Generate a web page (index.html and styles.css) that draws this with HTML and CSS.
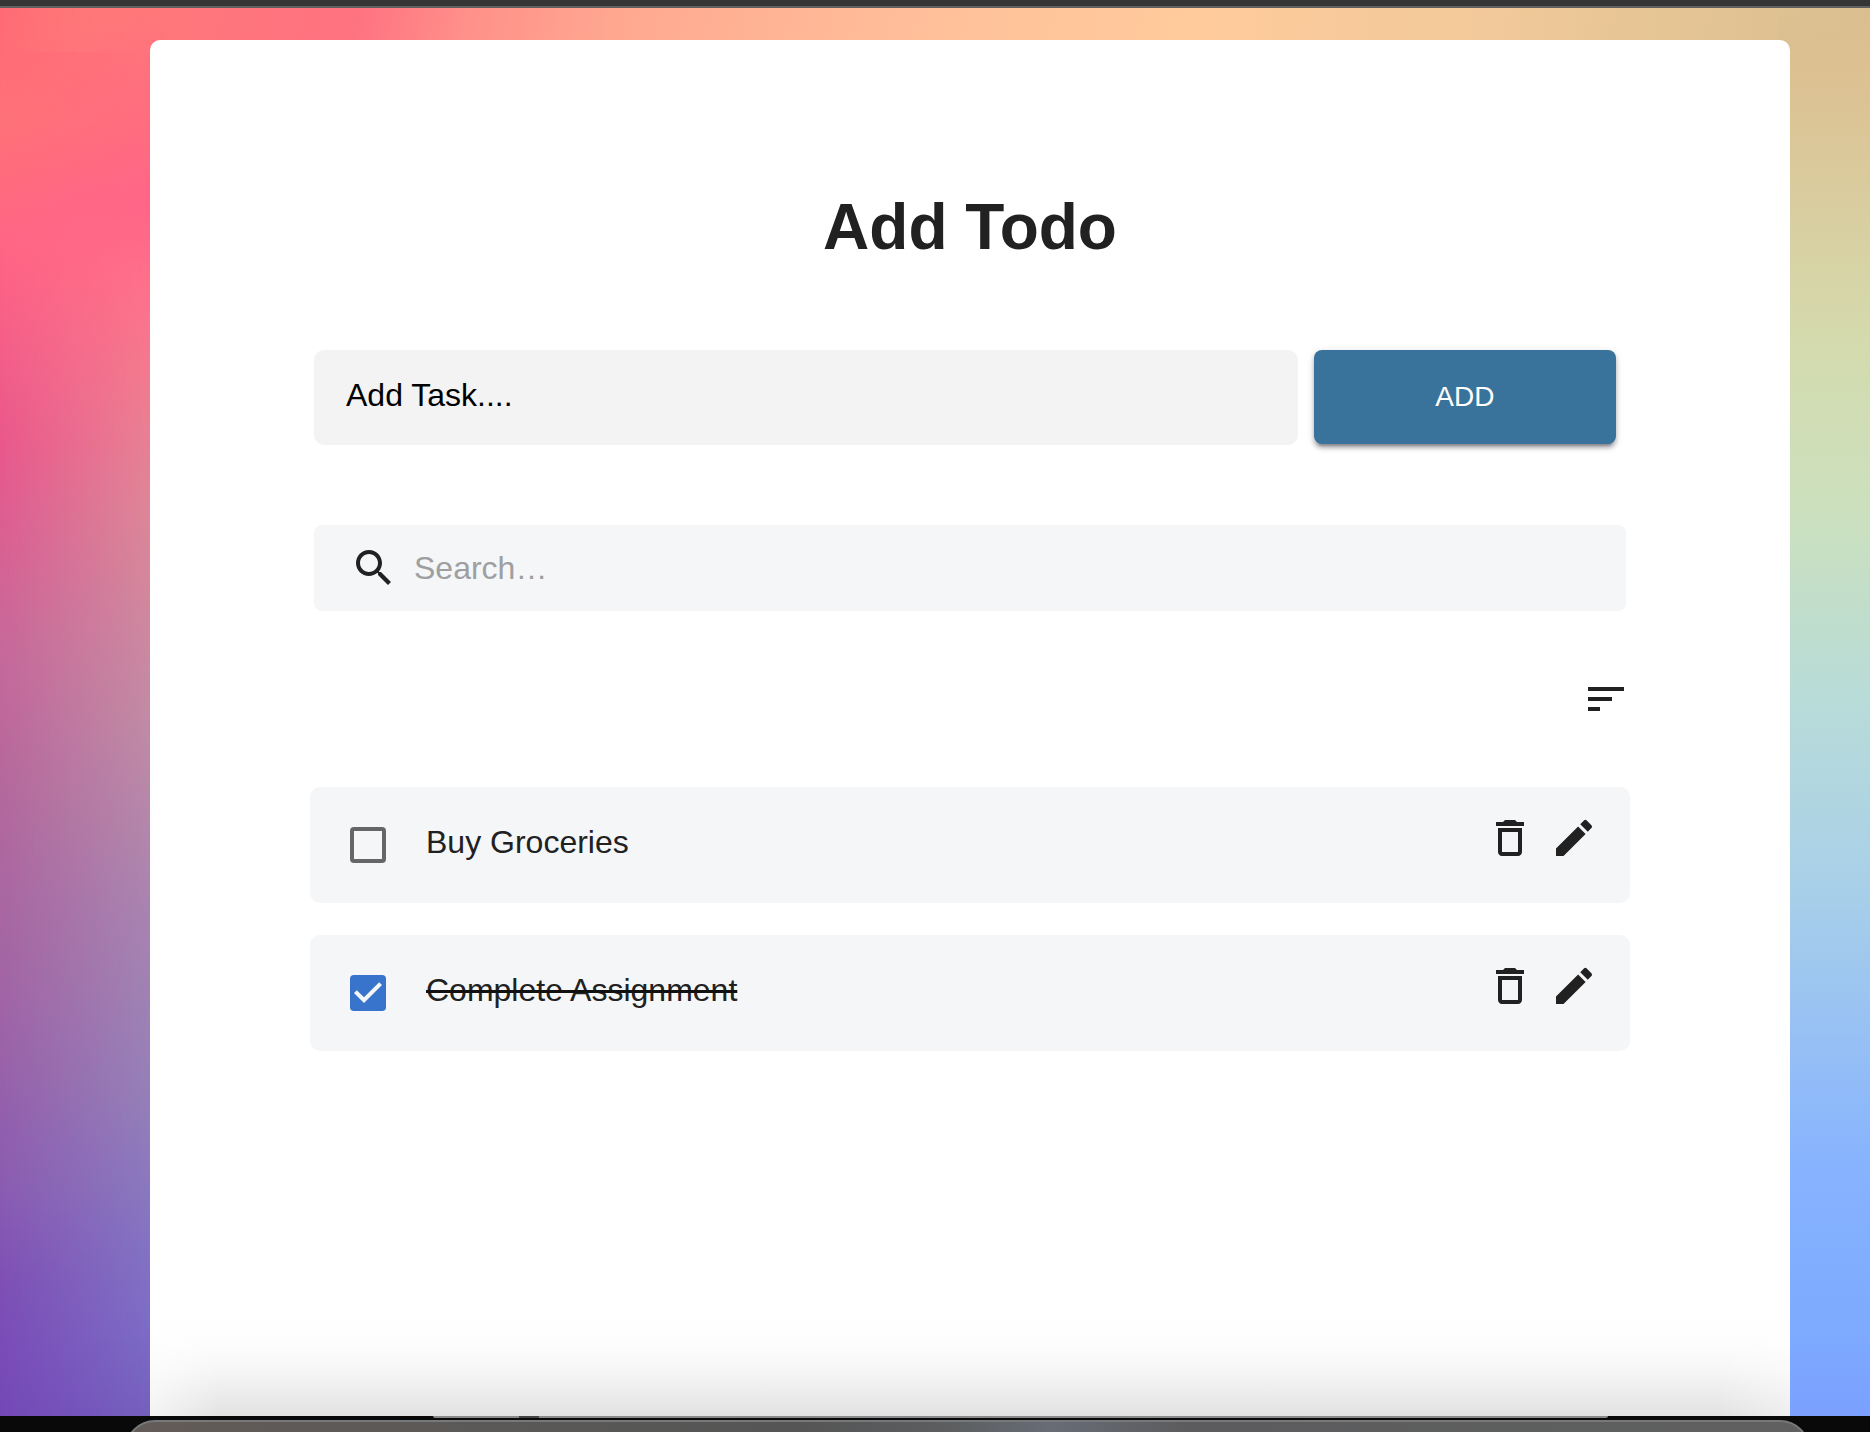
FILE: index.html
```html
<!DOCTYPE html>
<html lang="en">
<head>
<meta charset="utf-8">
<title>Add Todo</title>
<link rel="stylesheet" href="styles.css">
</head>
<body>
<div class="titlebar"></div>
<div class="page">
  <main class="card">
    <h1 class="heading">Add Todo</h1>
    <form class="add-form">
      <input class="task-input" type="text" placeholder="Add Task...." aria-label="Add task">
      <button class="add-button" type="button">ADD</button>
    </form>
    <label class="search">
      <svg class="icon" viewBox="0 0 24 24" aria-hidden="true"><path d="M15.5 14h-.79l-.28-.27C15.41 12.59 16 11.11 16 9.5 16 5.91 13.09 3 9.5 3S3 5.91 3 9.5 5.91 16 9.5 16c1.61 0 3.09-.59 4.23-1.57l.27.28v.79l5 4.99L20.49 19l-4.99-5zm-6 0C7.01 14 5 11.99 5 9.5S7.01 5 9.5 5 14 7.01 14 9.5 11.99 14 9.5 14z"/></svg>
      <input class="search-input" type="text" placeholder="Search…" aria-label="Search">
    </label>
    <div class="toolbar">
      <button class="icon-button" type="button" aria-label="Sort"><svg class="icon" viewBox="0 0 24 24"><path d="M3 18h6v-2H3v2zM3 6v2h18V6H3zm0 7h12v-2H3v2z"/></svg></button>
    </div>
    <ul class="todos">
      <li class="todo">
        <input class="check" type="checkbox" id="todo-1">
        <label class="todo-label" for="todo-1">Buy Groceries</label>
        <div class="actions">
          <button class="icon-button" type="button" aria-label="Delete"><svg class="icon" viewBox="0 0 24 24"><path d="M6 19c0 1.1.9 2 2 2h8c1.1 0 2-.9 2-2V7H6v12zM8 9h8v10H8V9zm7.500-5-1-1h-5l-1 1H5v2h14V4z"/></svg></button>
          <button class="icon-button" type="button" aria-label="Edit"><svg class="icon" viewBox="0 0 24 24"><path d="M3 17.250V21h3.750L17.810 9.940l-3.750-3.750L3 17.250zM20.710 7.040c.39-.39.39-1.020 0-1.410l-2.340-2.340a.9959.9959 0 0 0-1.410 0l-1.830 1.830 3.750 3.750 1.830-1.830z"/></svg></button>
        </div>
      </li>
      <li class="todo">
        <input class="check" type="checkbox" id="todo-2" checked>
        <label class="todo-label" for="todo-2">Complete Assignment</label>
        <div class="actions">
          <button class="icon-button" type="button" aria-label="Delete"><svg class="icon" viewBox="0 0 24 24"><path d="M6 19c0 1.1.9 2 2 2h8c1.1 0 2-.9 2-2V7H6v12zM8 9h8v10H8V9zm7.500-5-1-1h-5l-1 1H5v2h14V4z"/></svg></button>
          <button class="icon-button" type="button" aria-label="Edit"><svg class="icon" viewBox="0 0 24 24"><path d="M3 17.250V21h3.750L17.810 9.940l-3.750-3.750L3 17.250zM20.710 7.040c.39-.39.39-1.020 0-1.410l-2.340-2.340a.9959.9959 0 0 0-1.410 0l-1.830 1.830 3.750 3.750 1.830-1.830z"/></svg></button>
        </div>
      </li>
    </ul>
  </main>
</div>
<div class="desktop"><div class="window-edge"></div><div class="dock"></div></div>
</body>
</html>
```
FILE: styles.css
```css
* { box-sizing: border-box; }

body {
  margin: 0;
  min-height: 100vh;
  display: flex;
  flex-direction: column;
  overflow: hidden;
  font-family: "Liberation Sans", Arial, sans-serif;
  font-size: 32px;
  line-height: 48px;
  color: #212121;
}

.titlebar {
  height: 8px;
  background: #353535;
  border-bottom: 2px solid #5f6062;
}

/* Wallpaper: a top band, and one colour run down each side */
.page {
  flex: 1;
  display: flex;
  position: relative;
  padding: 32px 80px 0 150px;
  background:
    linear-gradient(to bottom, #dcbf9000 0%, #dcbf90 2%, #dcc294 6%, #d9cd9f 14%, #d4dbae 24%, #cbe0be 36%, #b8dcd8 49%, #a9d0e8 62%, #86b2ff 83%, #7eaaff 94%, #7ba0ff 100%) right / 92px 100% no-repeat,
    linear-gradient(100deg, #ff6b75 0%, #ff7878 5%, #ff7280 19%, #ff908a 25%, #ffa890 33%, #ffc09a 50%, #ffcb9c 64%, #f2c99a 79%, #e4c494 90%, #dabe90 100%) top / 100% 44px no-repeat,
    linear-gradient(to bottom, #ff6a75 0%, #ff7278 8%, #ff6585 17%, #ea588c 31%, #c8689a 45%, #b0689e 58%, #a064a6 71%, #8a5cb2 84%, #7f50b5 90%, #7548b8 100%);
}

/* Inner colour run of the left side, faded in towards the card */
.page::before {
  content: "";
  position: absolute;
  inset: 0 auto 0 0;
  width: 165px;
  background: linear-gradient(to bottom, #ff7779 0%, #ff6d80 8%, #ff6588 14%, #ff708a 19%, #f07c90 27%, #dc8698 36%, #c08ba5 51%, #a884b0 64%, #9580b8 77%, #8474c2 87%, #7c6cc6 94%, #7460bc 100%);
  mask-image: linear-gradient(to right, transparent, #000 150px);
}

.card {
  position: relative;
  flex: 1;
  padding: 152px 10% 0;
  border-radius: 10px 10px 0 0;
  background:
    linear-gradient(to right, #fff9, #fff0 70px) bottom / 100% 100px no-repeat,
    linear-gradient(to left, #fff6, #fff0 70px) bottom / 100% 100px no-repeat,
    linear-gradient(to top, #e2e2e2 0, #ececec 22px, #f6f6f6 46px, #fdfdfd 72px, #fff 100px);
}

.heading {
  margin: 0 0 88px;
  font-size: 64px;
  line-height: 70px;
  font-weight: 700;
  text-align: center;
}

.add-form { display: flex; gap: 16px; align-items: flex-start; }

input, button { font: inherit; color: inherit; border: 0; margin: 0; }

.task-input {
  width: 75%;
  height: 95px;
  padding: 0 32px 4px;
  border-radius: 10px;
  background: #f3f3f3;
}
.task-input::placeholder { color: #000; opacity: 1; }

.add-button {
  width: 23%;
  height: 94px;
  border-radius: 8px;
  background: #39739b;
  color: #fff;
  font-size: 28px;
  box-shadow: 0 6px 2px -4px #0003, 0 4px 4px #0024, 0 2px 10px #0000001f;
}

.search {
  display: flex;
  align-items: center;
  gap: 16px;
  height: 86px;
  margin-top: 80px;
  padding: 0 36px;
  border-radius: 8px;
  background: #f4f6f8;
}
.search-input { flex: 1; padding: 0; background: none; }
.search-input::placeholder { color: #9e9fa1; opacity: 1; }

.icon { display: block; width: 48px; height: 48px; flex: none; fill: #212121; }
.icon-button { padding: 0; background: none; }

.toolbar { display: flex; justify-content: flex-end; margin: 64px -4px; }

.todos {
  display: grid;
  gap: 32px;
  margin: 0 -4px;
  padding: 0;
  list-style: none;
}
.todo {
  display: flex;
  align-items: center;
  gap: 40px;
  height: 116px;
  padding: 0 32px 0 40px;
  border-radius: 10px;
  background: #f4f6f8;
}
.todo-label { flex: 1; padding-bottom: 6px; }
.check:checked + .todo-label { text-decoration: line-through #111 3px; }

.check {
  appearance: none;
  width: 36px;
  height: 36px;
  border: 4px solid #666;
  border-radius: 4px;
}
.check:checked {
  border: 0;
  background: #3874cb url("data:image/svg+xml,%3Csvg xmlns='http://www.w3.org/2000/svg' viewBox='3 3 18 18'%3E%3Cpath fill='%23f4f6f8' d='M10 17l-5-5 1.410-1.410L10 14.170l7.590-7.590L19 8z'/%3E%3C/svg%3E") center / 36px 36px;
}

.actions { display: flex; gap: 16px; padding-bottom: 14px; }

.desktop { height: 16px; background: #080908; overflow: hidden; }
.window-edge {
  height: 2px;
  margin: 0 262px 2px 433px;
  border-radius: 0 0 16px 16px;
  background: linear-gradient(to right, #8a8a8a 86px, #444 86px, #444 106px, #8a8a8a 106px);
}
.dock {
  height: 60px;
  margin: 0 60px 0 125px;
  border: 2px solid #77787a;
  border-radius: 40px;
  background: linear-gradient(to right, #635c58, #595857 25%, #555 40%, #5c5e60 49%, #686c76 55%, #5c5c5e 63%, #5f605f);
}
```
